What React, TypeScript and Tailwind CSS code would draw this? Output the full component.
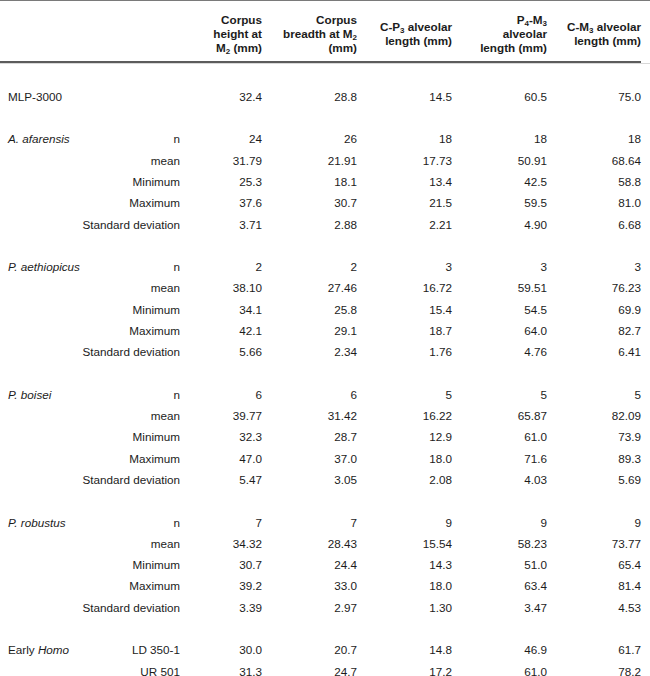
import React from "react";

type Row = { species?: React.ReactNode; label?: string; values?: string[] };

const GROUPS: { name: React.ReactNode; rows: [string, string[]][] }[] = [
  {
    name: <i>A. afarensis</i>,
    rows: [
      ["n", ["24", "26", "18", "18", "18"]],
      ["mean", ["31.79", "21.91", "17.73", "50.91", "68.64"]],
      ["Minimum", ["25.3", "18.1", "13.4", "42.5", "58.8"]],
      ["Maximum", ["37.6", "30.7", "21.5", "59.5", "81.0"]],
      ["Standard deviation", ["3.71", "2.88", "2.21", "4.90", "6.68"]],
    ],
  },
  {
    name: <i>P. aethiopicus</i>,
    rows: [
      ["n", ["2", "2", "3", "3", "3"]],
      ["mean", ["38.10", "27.46", "16.72", "59.51", "76.23"]],
      ["Minimum", ["34.1", "25.8", "15.4", "54.5", "69.9"]],
      ["Maximum", ["42.1", "29.1", "18.7", "64.0", "82.7"]],
      ["Standard deviation", ["5.66", "2.34", "1.76", "4.76", "6.41"]],
    ],
  },
  {
    name: <i>P. boisei</i>,
    rows: [
      ["n", ["6", "6", "5", "5", "5"]],
      ["mean", ["39.77", "31.42", "16.22", "65.87", "82.09"]],
      ["Minimum", ["32.3", "28.7", "12.9", "61.0", "73.9"]],
      ["Maximum", ["47.0", "37.0", "18.0", "71.6", "89.3"]],
      ["Standard deviation", ["5.47", "3.05", "2.08", "4.03", "5.69"]],
    ],
  },
  {
    name: <i>P. robustus</i>,
    rows: [
      ["n", ["7", "7", "9", "9", "9"]],
      ["mean", ["34.32", "28.43", "15.54", "58.23", "73.77"]],
      ["Minimum", ["30.7", "24.4", "14.3", "51.0", "65.4"]],
      ["Maximum", ["39.2", "33.0", "18.0", "63.4", "81.4"]],
      ["Standard deviation", ["3.39", "2.97", "1.30", "3.47", "4.53"]],
    ],
  },
  {
    name: (
      <>
        Early <i>Homo</i>
      </>
    ),
    rows: [
      ["LD 350-1", ["30.0", "20.7", "14.8", "46.9", "61.7"]],
      ["UR 501", ["31.3", "24.7", "17.2", "61.0", "78.2"]],
    ],
  },
];

// species | label | 5 measurement columns, right edges at 180/262/357/452/547/641
const GRID =
  "grid grid-cols-[72px_108px_82px_95px_95px_95px_94px] w-[641px]";

function Sub({ children }: { children: React.ReactNode }) {
  return <sub className="text-[8px]">{children}</sub>;
}

function DataRow({ species, label, values }: Row) {
  return (
    <div className={`${GRID} h-[21.29px] items-center`}>
      <div className="pl-2 whitespace-nowrap">{species}</div>
      <div className="text-right whitespace-nowrap">{label}</div>
      {(values ?? ["", "", "", "", ""]).map((v, i) => (
        <div key={i} className="text-right">
          {v}
        </div>
      ))}
    </div>
  );
}

export default function App() {
  const rows: Row[] = [
    {},
    { species: "MLP-3000", values: ["32.4", "28.8", "14.5", "60.5", "75.0"] },
  ];
  GROUPS.forEach((g) => {
    rows.push({});
    g.rows.forEach(([label, values], i) => {
      rows.push({ species: i === 0 ? g.name : undefined, label, values });
    });
  });

  return (
    <div
      className="bg-white text-[#1c1c1c] text-[11.7px] leading-[14px] w-[650px] h-[676px] overflow-hidden"
      style={{ fontFamily: '"Liberation Sans", Arial, sans-serif' }}
    >
      {/* Header */}
      <div className="border-t border-[#7a7a7a]">
        <div
          className={`${GRID} h-[62px] pt-[6px] items-center font-bold leading-[14px] border-b-2 border-[#5c5c5c]`}
        >
          <div />
          <div />
          <div className="text-right">
            Corpus
            <br />
            height at
            <br />M<Sub>2</Sub> (mm)
          </div>
          <div className="text-right">
            Corpus
            <br />
            breadth at M<Sub>2</Sub>
            <br />
            (mm)
          </div>
          <div className="text-right">
            C-P<Sub>3</Sub> alveolar
            <br />
            length (mm)
          </div>
          <div className="text-right">
            P<Sub>4</Sub>-M<Sub>3</Sub>
            <br />
            alveolar
            <br />
            length (mm)
          </div>
          <div className="text-right">
            C-M<Sub>3</Sub> alveolar
            <br />
            length (mm)
          </div>
        </div>
        <div className="h-px bg-[#d8d8d8] w-[650px]" />
      </div>

      {/* Body */}
      <div className="mt-px">
        {rows.map((r, i) => (
          <DataRow key={i} {...r} />
        ))}
      </div>
    </div>
  );
}
